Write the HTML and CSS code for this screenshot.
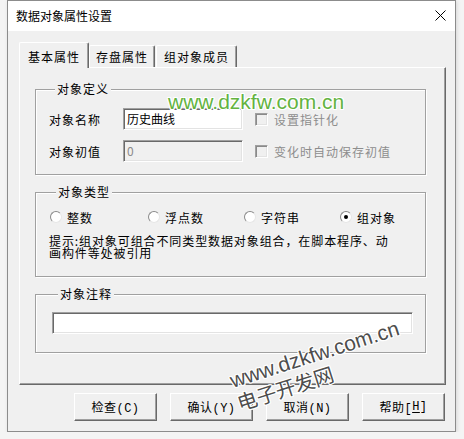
FILE: index.html
```html
<!DOCTYPE html>
<html lang="zh-CN">
<head>
<meta charset="utf-8">
<title>数据对象属性设置</title>
<link rel="stylesheet" href="styles.css">
</head>
<body>
<div class="window">
  <div class="titlebar">
    <span class="title">数据对象属性设置</span>
    <svg class="close" width="11" height="11" viewBox="0 0 11 11"><path d="M0.5 0.5 L10.5 10.5 M10.5 0.5 L0.5 10.5" stroke="#000" stroke-width="1" fill="none"/></svg>
  </div>
  <div class="client">
    <div class="tabs">
      <div class="tab active">基本属性</div>
      <div class="tab tab2">存盘属性</div>
      <div class="tab tab3">组对象成员</div>
    </div>
    <div class="panel">
      <fieldset class="group g1">
        <legend>对象定义</legend>
        <div class="row">
          <span class="label">对象名称</span>
          <span class="input">历史曲线</span>
          <span class="check"><span class="box"></span>设置指针化</span>
        </div>
        <div class="row row2">
          <span class="label">对象初值</span>
          <span class="input disabled">0</span>
          <span class="check"><span class="box"></span>变化时自动保存初值</span>
        </div>
      </fieldset>
      <fieldset class="group g2">
        <legend>对象类型</legend>
        <div class="radios">
          <span class="radio r1"><span class="dot"></span>整数</span>
          <span class="radio r2"><span class="dot"></span>浮点数</span>
          <span class="radio r3"><span class="dot"></span>字符串</span>
          <span class="radio r4"><span class="dot on"></span>组对象</span>
        </div>
        <p class="hint">提示:组对象可组合不同类型数据对象组合，在脚本程序、动<br>画构件等处被引用</p>
      </fieldset>
      <fieldset class="group g3">
        <legend>对象注释</legend>
        <div class="input note"></div>
      </fieldset>
    </div>
    <div class="buttons">
      <span class="btn">检查(C)</span>
      <span class="btn">确认(Y)</span>
      <span class="btn">取消(N)</span>
      <span class="btn">帮助[<u>H</u>]</span>
    </div>
  </div>
</div>
<div class="wm-green">www.dzkfw.com.cn</div>
<div class="wm-dark">www.dzkfw.com.cn<br><span class="cn">电子开发网</span></div>
</body>
</html>
```
FILE: styles.css
```css
* { box-sizing: border-box; }
body {
  margin: 0;
  background: #f4f4f4;
  font-family: "Noto Sans CJK SC", sans-serif;
  font-size: 12px;
  color: #000;
}
.window {
  margin-left: 7px;
  width: 449px;
  height: 432px;
  border: 1px solid #8c8c8c;
  background: #f0f0f0;
  display: flex;
  flex-direction: column;
  box-shadow: 1px 1px 4px rgba(0,0,0,0.12);
}
.titlebar {
  height: 30px;
  flex: none;
  background: #fff;
  display: flex;
  align-items: center;
  justify-content: space-between;
  padding: 0 9px 1px 8px;
}
.title { line-height: 14px; }
.close { display: block; }
.client {
  flex: 1;
  padding: 11px 0 0 11px;
}
.tabs {
  display: flex;
  align-items: flex-end;
  height: 25px;
}
.tab {
  flex: none;
  height: 22px;
  border-top: 1px solid #fff;
  border-left: 1px solid #fff;
  border-right: 1px solid #696969;
  box-shadow: inset -1px 0 #a0a0a0;
  border-radius: 2px 2px 0 0;
  text-align: center;
  letter-spacing: 1px;
  line-height: 21px;
}
.tab.active {
  width: 70px;
  height: 26px;
  margin-bottom: -1px;
  position: relative;
  z-index: 1;
  background: #f0f0f0;
  line-height: 27px;
}
.tab2 { width: 66px; }
.tab3 { width: 81px; margin-left: 1px; }
.panel {
  width: 427px;
  height: 318px;
  border-top: 1px solid #fff;
  border-left: 1px solid #fff;
  border-right: 1px solid #696969;
  border-bottom: 1px solid #696969;
  box-shadow: inset -1px -1px #a0a0a0;
  padding: 0 0 0 15px;
}
.group {
  margin: 0;
  width: 391px;
  border: 1px solid #a0a0a0;
  box-shadow: inset 1px 1px #fff, 1px 1px #fff;
  min-width: 0;
}
.group legend {
  margin-left: 6px;
  padding: 0 2px;
  line-height: 16px;
  letter-spacing: 1px;
  background: #f0f0f0;
}
.g1 { margin-top: 13px; padding: 11px 0 12px 13px; }
.g2 { margin-top: 9px; padding: 9px 0 17px 14px; }
.g3 { margin-top: 9px; padding: 10px 0 18px 16px; }
.row {
  display: flex;
  align-items: center;
  height: 22px;
}
.row2 { margin-top: 10px; }
.label { width: 74px; letter-spacing: 1px; }
.input {
  display: block;
  width: 120px;
  height: 22px;
  background: #fff;
  border: 1px solid;
  border-color: #a0a0a0 #fff #fff #a0a0a0;
  box-shadow: inset 1px 1px #696969, inset -1px -1px #e3e3e3;
  padding-left: 3px;
  line-height: 19px;
}
.input.disabled { background: #f0f0f0; color: #8a8a8a; }
.note { width: 361px; }
.check {
  margin-left: 12px;
  display: flex;
  align-items: center;
  gap: 6px;
  color: #8d8d8d;
  letter-spacing: 1px;
}
.box {
  width: 13px;
  height: 13px;
  border: 1px solid;
  border-color: #a0a0a0 #fff #fff #a0a0a0;
  box-shadow: inset 1px 1px #8a8a8a, inset -1px -1px #e3e3e3;
  background: #f0f0f0;
}
.radios {
  display: flex;
  height: 16px;
  align-items: center;
}
.radio {
  display: flex;
  align-items: center;
  gap: 5px;
  letter-spacing: 1px;
}
.r1 { width: 98px; }
.r2 { width: 96px; }
.r3 { width: 96px; }
.dot {
  width: 12px;
  height: 12px;
  border-radius: 50%;
  background: #fff;
  border: 1px solid;
  border-color: #8a8a8a #e6e6e6 #e6e6e6 #8a8a8a;
  display: flex;
  align-items: center;
  justify-content: center;
}
.dot.on::after {
  content: "";
  width: 4px;
  height: 4px;
  border-radius: 50%;
  background: #000;
}
.hint {
  margin: 10px 0 0 -1px;
  line-height: 12px;
  letter-spacing: 0.9px;
}
.buttons {
  display: flex;
  gap: 13px;
  margin-top: 8px;
  padding-left: 55px;
}
.btn {
  width: 83px;
  height: 28px;
  border: 1px solid;
  border-color: #fff #696969 #696969 #fff;
  box-shadow: inset -1px -1px #a0a0a0;
  background: #f0f0f0;
  display: flex;
  align-items: center;
  justify-content: center;
  font-family: "Liberation Mono", "Noto Sans CJK SC", monospace;
  font-size: 12px;
  letter-spacing: 0.5px;
  padding-bottom: 1px;
}
.btn u { text-decoration-thickness: 1px; text-underline-offset: 2px; }
.wm-green {
  position: absolute;
  left: 168px;
  top: 91px;
  font-family: "Liberation Sans", sans-serif;
  font-size: 21px;
  line-height: 21px;
  color: #63b33f;
  text-shadow: 1px 0 #fff, -1px 0 #fff, 0 1px #fff, 0 -1px #fff, 1px 1px #fff, -1px -1px #fff, 1px -1px #fff, -1px 1px #fff;
}
.wm-dark {
  position: absolute;
  left: 227px;
  top: 370px;
  transform: rotate(-17.7deg);
  transform-origin: 0 0;
  font-family: "Liberation Sans", sans-serif;
  font-size: 21px;
  line-height: 23px;
  color: #4d4d4d;
  white-space: nowrap;
  text-shadow: 1px 0 #fff, -1px 0 #fff, 0 1px #fff, 0 -1px #fff, 1px 1px #fff, -1px -1px #fff, 1px -1px #fff, -1px 1px #fff;
}
.wm-dark .cn { font-family: "Noto Sans CJK SC", sans-serif; font-size: 20px; }
```
